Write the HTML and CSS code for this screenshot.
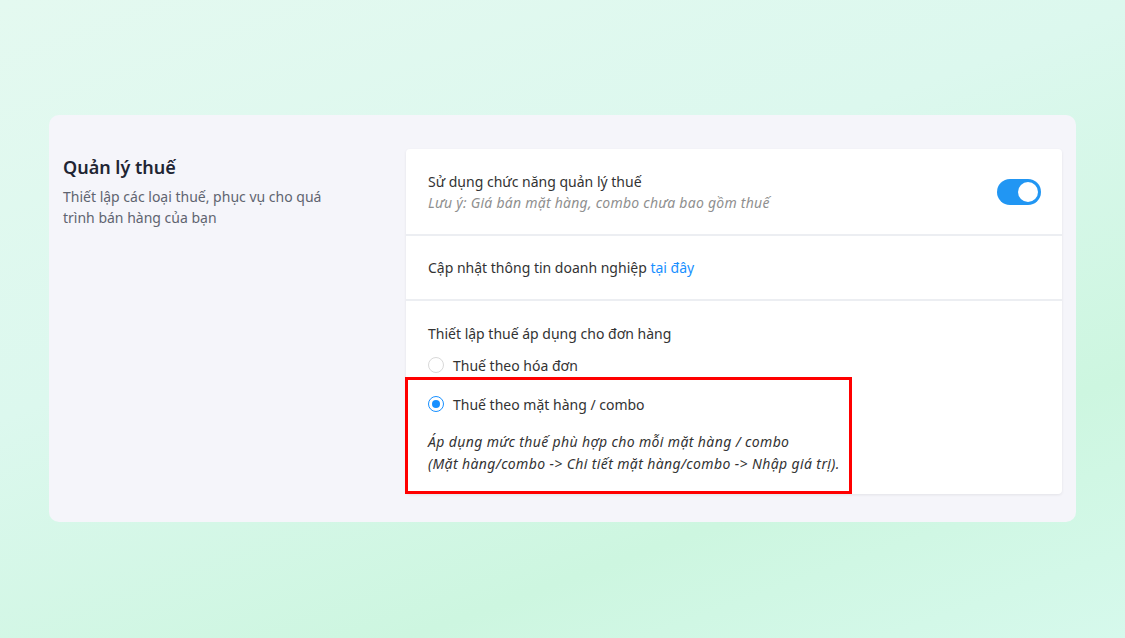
FILE: index.html
```html
<!DOCTYPE html>
<html lang="vi">
<head>
  <meta charset="UTF-8">
  <meta name="viewport" content="width=device-width, initial-scale=1">
  <title>Quản lý thuế</title>
  <link rel="stylesheet" href="styles.css">
</head>
<body>
  <div class="settings-card">
    <div class="settings-info">
      <h2>Quản lý thuế</h2>
      <p>Thiết lập các loại thuế, phục vụ cho quá trình bán hàng của bạn</p>
    </div>

    <div class="settings-panel">
      <div class="panel-row row-toggle">
        <div>
          <div class="row-title">Sử dụng chức năng quản lý thuế</div>
          <div class="row-note">Lưu ý: Giá bán mặt hàng, combo chưa bao gồm thuế</div>
        </div>
        <label class="switch">
          <input type="checkbox" checked>
          <span class="slider"></span>
        </label>
      </div>

      <div class="panel-row">
        Cập nhật thông tin doanh nghiệp <a href="#">tại đây</a>
      </div>

      <div class="panel-row row-options">
        <div class="row-title">Thiết lập thuế áp dụng cho đơn hàng</div>
        <label class="radio">
          <input type="radio" name="tax-mode">
          <span class="dot"></span>
          Thuế theo hóa đơn
        </label>
        <div class="option-highlight">
          <label class="radio">
            <input type="radio" name="tax-mode" checked>
            <span class="dot"></span>
            Thuế theo mặt hàng / combo
          </label>
          <p class="option-desc">
            Áp dụng mức thuế phù hợp cho mỗi mặt hàng / combo<br>
            (Mặt hàng/combo -&gt; Chi tiết mặt hàng/combo -&gt; Nhập giá trị).
          </p>
        </div>
      </div>
    </div>
  </div>
</body>
</html>
```

FILE: styles.css
```css
body {
  font-family: "Noto Sans", "Open Sans", sans-serif;
  font-size: 14px;
  color: #333;
  margin: 0;
  padding: 115px 49px 0;
  min-height: 638px;
  box-sizing: border-box;
  background: linear-gradient(160deg, #e4f9f0 0%, #dcf8ee 40%, #cdf6e0 75%, #d6f9ec 100%);
}

.settings-card {
  display: grid;
  grid-template-columns: 343px 1fr;
  background-color: #f5f5fa;
  border-radius: 10px;
  padding: 34px 14px 28px;
}

.settings-info {
  padding-top: 5px;
}

.settings-info h2 {
  margin: 0 0 6px;
  font-size: 18px;
  font-weight: 600;
  line-height: 26px;
  color: #1f2533;
}

.settings-info p {
  margin: 0;
  max-width: 280px;
  line-height: 21px;
  color: #5f6470;
}

.settings-panel {
  background-color: #fff;
  border-radius: 4px;
  box-shadow: 0 1px 3px rgba(0, 0, 0, 0.08);
}

.panel-row {
  padding: 21px 22px;
  line-height: 21px;
}

.panel-row + .panel-row {
  border-top: 2px solid #eceef2;
}

.row-toggle {
  display: flex;
  align-items: center;
  justify-content: space-between;
  padding-top: 22px;
  padding-right: 21px;
}

.row-note {
  font-style: italic;
  letter-spacing: 0.25px;
  color: #8f8f8f;
}

.panel-row a {
  color: #1890ff;
  text-decoration: none;
}

/* toggle switch */
.switch {
  position: relative;
  width: 44px;
  height: 26px;
}

.switch input {
  display: none;
}

.slider {
  position: absolute;
  inset: 0;
  background-color: #2196f3;
  border-radius: 13px;
}

.slider::after {
  content: "";
  position: absolute;
  top: 3px;
  right: 3px;
  width: 20px;
  height: 20px;
  border-radius: 50%;
  background-color: #fff;
}

/* radio options */
.row-options {
  padding: 22px 0 0 22px;
}

.row-options > .row-title {
  margin-bottom: 9px;
}

.radio {
  display: flex;
  align-items: center;
  gap: 9px;
  height: 24px;
  cursor: pointer;
}

.radio input {
  display: none;
}

.dot {
  width: 16px;
  height: 16px;
  border: 1px solid #d9d9d9;
  border-radius: 50%;
  box-sizing: border-box;
  position: relative;
}

.radio input:checked + .dot {
  border-color: #1890ff;
}

.radio input:checked + .dot::after {
  content: "";
  position: absolute;
  top: 3px;
  left: 3px;
  width: 8px;
  height: 8px;
  border-radius: 50%;
  background-color: #1890ff;
}

.option-highlight {
  width: 421px;
  margin: 0 0 0 -23px;
  padding: 12px 0 16px 20px;
  border: 3px solid #f00;
}

.option-desc {
  margin: 15px 0 0;
  font-style: italic;
  letter-spacing: 0.38px;
  line-height: 22px;
}
```
